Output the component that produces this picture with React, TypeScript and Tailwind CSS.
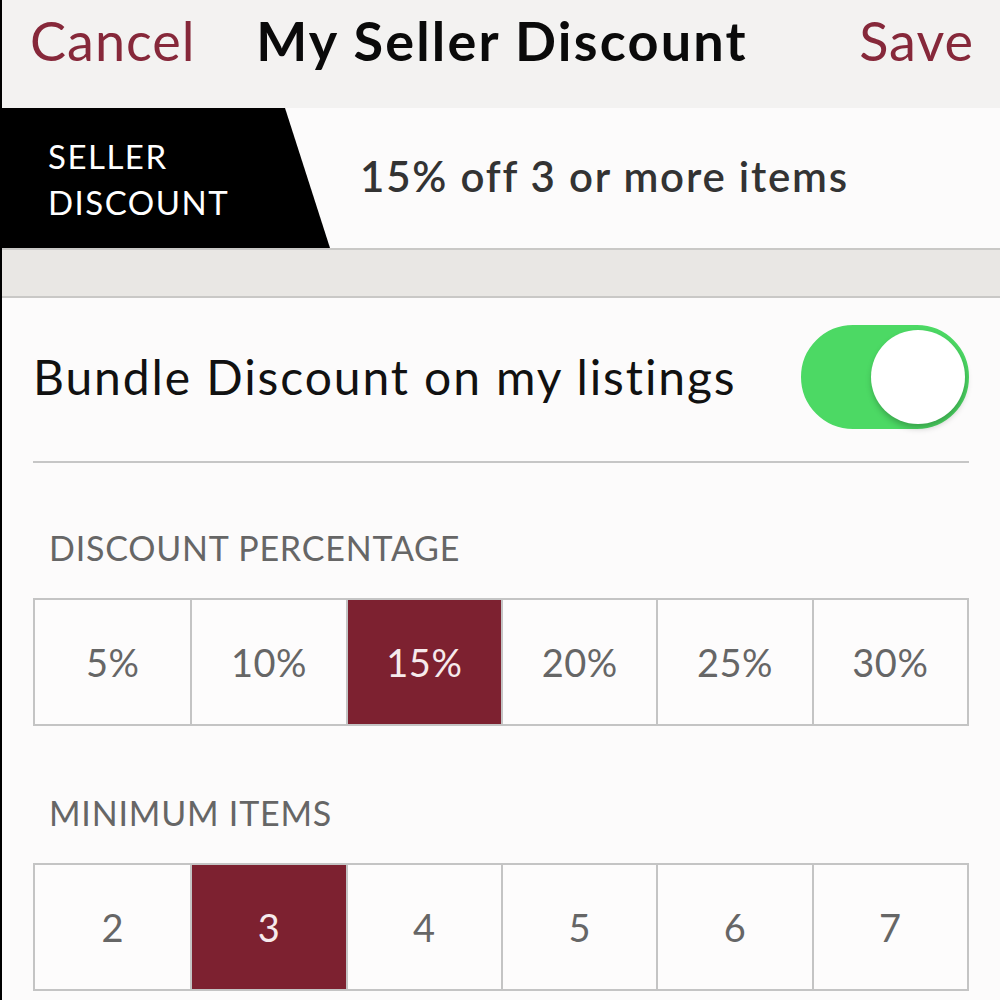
import React, { useState } from 'react';

const percents = ['5%', '10%', '15%', '20%', '25%', '30%'];
const minimums = ['2', '3', '4', '5', '6', '7'];

function Segmented({
  options,
  value,
  onChange,
}: {
  options: string[];
  value: string;
  onChange: (v: string) => void;
}) {
  return (
    <div className="grid grid-cols-6 h-[128px] border-2 border-[#c4c4c4] bg-[#fdfcfc]">
      {options.map((opt, i) => {
        const active = opt === value;
        return (
          <button
            key={opt}
            onClick={() => onChange(opt)}
            className={
              'flex items-center justify-center text-[38px] tracking-[0.5px] ' +
              (i > 0 ? 'border-l-2 border-[#c4c4c4] ' : '') +
              (active ? 'bg-[#7d2130] text-[#f6eaec]' : 'text-[#666666]')
            }
          >
            {opt}
          </button>
        );
      })}
    </div>
  );
}

export default function App() {
  const [enabled, setEnabled] = useState(true);
  const [percent, setPercent] = useState('15%');
  const [minimum, setMinimum] = useState('3');

  return (
    <div
      className="w-[1000px] h-[1000px] overflow-hidden bg-[#fcfbfb] border-l-2 border-black"
      style={{ fontFamily: 'Lato, "Noto Sans", sans-serif' }}
    >
      {/* nav bar */}
      <div className="h-[108px] bg-[#f3f2f1] grid grid-cols-[1fr_auto_1fr] items-center pl-[28px] pr-[26px] pb-[30px]">
        <button className="justify-self-start text-[54px] tracking-[1px] text-[#86283a]">Cancel</button>
        <h1 className="text-[54px] font-bold tracking-[2.2px] text-[#0a0a0a]">My Seller Discount</h1>
        <button className="justify-self-end text-[54px] tracking-[1px] text-[#86283a]">Save</button>
      </div>

      {/* banner */}
      <div className="h-[140px] flex items-center bg-[#fcfbfb]">
        <div
          className="h-full w-[328px] bg-black flex flex-col justify-center pl-[46px] pt-[2px] text-white text-[33px] tracking-[1.5px] leading-[46px]"
          style={{ clipPath: 'polygon(0 0, 283px 0, 100% 100%, 0 100%)' }}
        >
          <span>SELLER</span>
          <span>DISCOUNT</span>
        </div>
        <span className="ml-[30px] mb-[4px] text-[42px] font-semibold tracking-[1.8px] text-[#333333]">
          15% off 3 or more items
        </span>
      </div>

      {/* textured separator */}
      <div className="h-[50px] bg-[#e9e7e4] border-y-2 border-[#c9c8c6]" />

      {/* content */}
      <div className="px-[31px]">
        <div className="h-[165px] flex items-center justify-between border-b-2 border-[#c6c6c6] pb-[6px]">
          <span className="text-[48px] tracking-[1.9px] text-[#111111]">Bundle Discount on my listings</span>
          <button
            onClick={() => setEnabled(!enabled)}
            className={
              'w-[168px] h-[104px] rounded-full p-[2px] flex items-center border-2 ' +
              (enabled ? 'bg-[#4cd964] border-[#4cd964] justify-end' : 'bg-[#eeeeee] border-[#dddddd] justify-start')
            }
          >
            <span className="w-[94px] h-[94px] rounded-full bg-white shadow-[1px_4px_6px_rgba(0,0,0,0.25)]" />
          </button>
        </div>

        <div className="pt-[68px] pb-[33px] pl-[16px] text-[34px] tracking-[0.8px] text-[#666666] leading-none">
          DISCOUNT PERCENTAGE
        </div>
        <Segmented options={percents} value={percent} onChange={setPercent} />

        <div className="pt-[70px] pb-[33px] pl-[16px] text-[34px] tracking-[0.8px] text-[#666666] leading-none">
          MINIMUM ITEMS
        </div>
        <Segmented options={minimums} value={minimum} onChange={setMinimum} />
      </div>
    </div>
  );
}
